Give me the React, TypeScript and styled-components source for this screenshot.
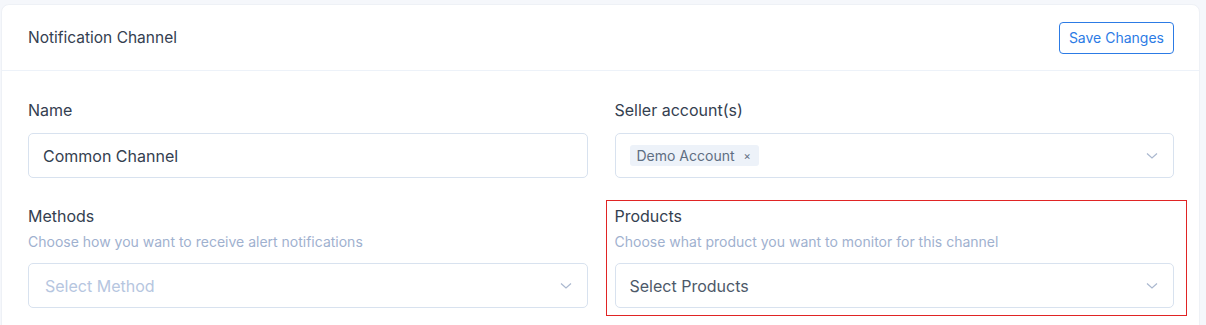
import styled, { createGlobalStyle } from "styled-components";

const GlobalStyle = createGlobalStyle`
  body {
    margin: 0;
    background: #f5f7fb;
    font-family: Inter, "Noto Sans", sans-serif;
    color: #344050;
  }
`;

const Page = styled.div`
  padding: 4px 6px 0 1px;
  height: 325px;
  overflow: hidden;
  box-sizing: border-box;
`;

const Card = styled.section`
  background: #fff;
  border-radius: 8px;
  border: 1px solid #eef1f6;
  min-height: 340px;
`;

const CardHeader = styled.header`
  display: flex;
  align-items: center;
  justify-content: space-between;
  height: 65px;
  padding: 0 25px 0 26px;
  border-bottom: 1px solid #edf2f9;
`;

const Title = styled.h5`
  margin: 0;
  font-size: 15.5px;
  font-weight: 400;
  color: #344050;
`;

const OutlineButton = styled.button`
  font-family: inherit;
  font-size: 14px;
  color: #2c7be5;
  background: #fff;
  border: 1px solid #2c7be5;
  border-radius: 4px;
  height: 32px;
  padding: 0 9px;
  cursor: pointer;
`;

const CardBody = styled.div`
  display: grid;
  grid-template-columns: 1fr 1fr;
  column-gap: 27px;
  row-gap: 26px;
  padding: 27px 25px 0 26px;
`;

const Field = styled.div<{ $flagged?: boolean }>`
  position: relative;
  display: flex;
  flex-direction: column;

  ${({ $flagged }) =>
    $flagged &&
    `
    &::after {
      content: "";
      position: absolute;
      top: -4px;
      left: -9px;
      right: -13px;
      bottom: -8px;
      border: 1px solid #e02424;
      pointer-events: none;
    }
  `}
`;

const Label = styled.label`
  font-size: 16px;
  color: #344050;
  line-height: 24px;
  margin-bottom: 11px;
`;

const Help = styled.div`
  font-size: 14px;
  color: #9fb1cf;
  line-height: 21px;
  margin: -8px 0 11px;
`;

const TextInput = styled.input`
  font-family: inherit;
  font-size: 16px;
  color: #344050;
  height: 45px;
  box-sizing: border-box;
  border: 1px solid #d8e2ef;
  border-radius: 5px;
  padding: 0 14px;
  outline: none;
`;

const SelectBox = styled.div`
  display: flex;
  align-items: center;
  justify-content: space-between;
  height: 45px;
  box-sizing: border-box;
  border: 1px solid #d8e2ef;
  border-radius: 5px;
  padding: 0 15px 0 14px;
  cursor: pointer;
`;

const SelectText = styled.span<{ $placeholder?: boolean }>`
  font-size: 16px;
  color: ${({ $placeholder }) => ($placeholder ? "#b6c6e0" : "#4d5969")};
  padding-left: ${({ $placeholder }) => ($placeholder ? "2px" : "0")};
`;

const Chip = styled.span`
  display: inline-flex;
  align-items: center;
  gap: 9px;
  height: 21px;
  padding: 0 8px 0 7px;
  background: #edf2f9;
  border-radius: 3px;
  font-size: 14px;
  color: #5e6e82;
`;

const ChipClose = styled.span`
  font-size: 11px;
  color: #5e6e82;
`;

const Chevron = () => (
  <svg width="12" height="8" viewBox="0 0 12 8" fill="none">
    <path d="M1 1.5 6 6l5-4.5" stroke="#aab8cf" strokeWidth="1.2" />
  </svg>
);

export default function App() {
  return (
    <>
      <GlobalStyle />
      <Page>
        <Card>
          <CardHeader>
            <Title>Notification Channel</Title>
            <OutlineButton>Save Changes</OutlineButton>
          </CardHeader>
          <CardBody>
            <Field>
              <Label>Name</Label>
              <TextInput defaultValue="Common Channel" />
            </Field>
            <Field>
              <Label>Seller account(s)</Label>
              <SelectBox>
                <Chip>
                  Demo Account <ChipClose>×</ChipClose>
                </Chip>
                <Chevron />
              </SelectBox>
            </Field>
            <Field>
              <Label>Methods</Label>
              <Help>Choose how you want to receive alert notifications</Help>
              <SelectBox>
                <SelectText $placeholder>Select Method</SelectText>
                <Chevron />
              </SelectBox>
            </Field>
            <Field $flagged>
              <Label>Products</Label>
              <Help>Choose what product you want to monitor for this channel</Help>
              <SelectBox>
                <SelectText>Select Products</SelectText>
                <Chevron />
              </SelectBox>
            </Field>
          </CardBody>
        </Card>
      </Page>
    </>
  );
}
